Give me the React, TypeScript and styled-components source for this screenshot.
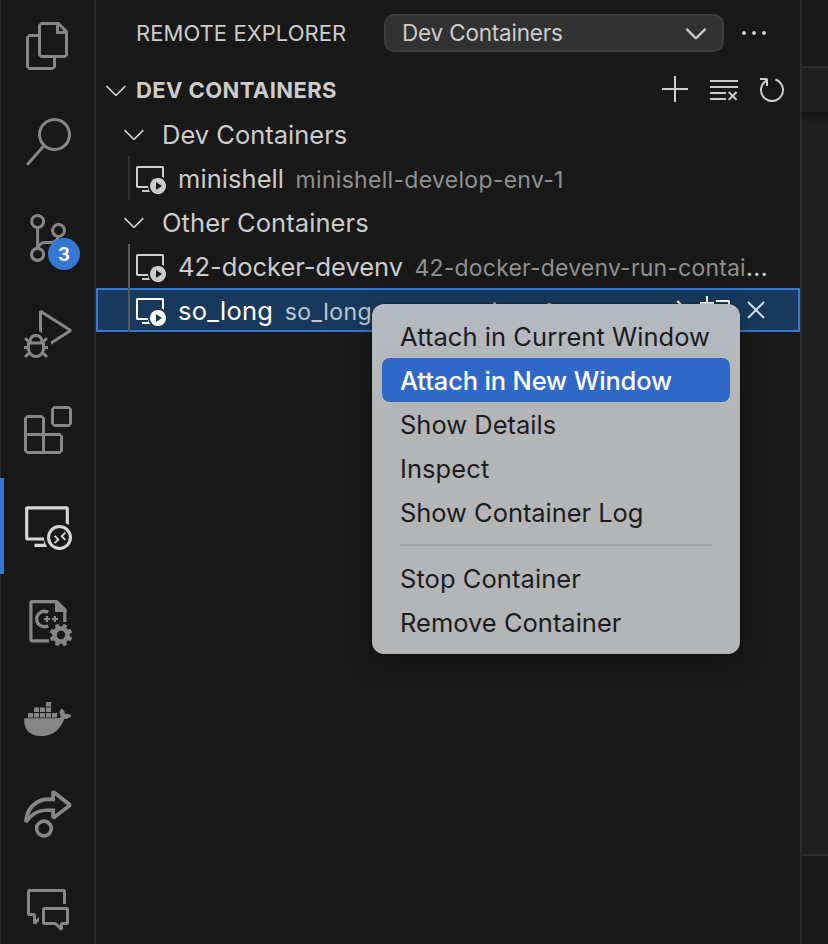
import React from 'react';
import styled, { createGlobalStyle, css } from 'styled-components';
import {
  VscAdd,
  VscArrowRight,
  VscChevronDown,
  VscClearAll,
  VscClose,
  VscCommentDiscussion,
  VscDebugAlt,
  VscEllipsis,
  VscEmptyWindow,
  VscExtensions,
  VscFiles,
  VscLiveShare,
  VscRefresh,
  VscRemoteExplorer,
  VscSearch,
  VscSourceControl,
  VscVmRunning,
} from 'react-icons/vsc';

const GlobalStyle = createGlobalStyle`
  * { box-sizing: border-box; }
  body {
    margin: 0;
    background: #181818;
    overflow: hidden;
    font-family: Inter, "Liberation Sans", sans-serif;
    -webkit-font-smoothing: antialiased;
  }
  svg { display: block; flex: none; }
`;

const Workbench = styled.div`
  position: relative;
  display: flex;
  width: 828px;
  height: 944px;
  overflow: hidden;
  background: #181818;
  color: #cccccc;
`;

/* Activity bar */

const ActivityBar = styled.nav`
  flex: none;
  width: 96px;
  border-left: 1px solid #2b2b2b;
  border-right: 2px solid #2b2b2b;
`;

const ActivityList = styled.div`
  display: flex;
  flex-direction: column;
  margin: -2px 0 0 -1px;
`;

const ActivityItem = styled.div<{ $active?: boolean }>`
  position: relative;
  display: flex;
  align-items: center;
  width: 96px;
  height: 96px;
  padding-left: 24px;
  color: ${(p) => (p.$active ? '#d7d7d7' : '#868686')};
  ${(p) =>
    p.$active &&
    css`
      padding-left: 20px;
      border-left: 4px solid #3478d4;
    `}
`;

const ShareIcon = styled(VscLiveShare)`
  width: 51px;
  height: 51px;
  margin: 0 0 2px -2.5px;
`;

const Badge = styled.span`
  position: absolute;
  left: 48px;
  top: 48px;
  width: 32px;
  height: 32px;
  border-radius: 50%;
  background: #3478d4;
  color: #ffffff;
  font-size: 18.5px;
  font-weight: 700;
  line-height: 32px;
  text-align: center;
`;

/* Side bar */

const SideBar = styled.section`
  display: flex;
  flex-direction: column;
  flex: none;
  width: 706px;
  border-right: 2px solid #2b2b2b;
`;

const TitleBar = styled.header`
  display: flex;
  align-items: center;
  height: 66px;
  padding-left: 40px;
`;

const Title = styled.h2`
  flex: none;
  width: 248px;
  margin: 0;
  font-size: 22px;
  font-weight: 400;
  letter-spacing: 0.05px;
`;

const Select = styled.div`
  display: flex;
  align-items: center;
  justify-content: space-between;
  width: 340px;
  height: 38px;
  padding: 0 10px 0 16px;
  border: 2px solid #3c3c3c;
  border-radius: 10px;
  background: #313131;
  font-size: 22.5px;
  letter-spacing: -0.19px;
  svg { stroke: currentColor; stroke-width: 0.4; }
`;

const SelectValue = styled.span`
  padding-bottom: 2px;
`;

const MoreButton = styled.span`
  margin-left: 14px;
`;

const SectionHeader = styled.div`
  display: flex;
  align-items: center;
  height: 46px;
  padding: 2px 12px 0 4px;
`;

const SectionTitle = styled.h3`
  flex: 1;
  margin: 0 0 0 4px;
  font-size: 22px;
  font-weight: 700;
  letter-spacing: 0.4px;
`;

const SectionActions = styled.div`
  display: flex;
  gap: 16px;
`;

const Tree = styled.div`
  display: flex;
  flex-direction: column;
`;

const GroupRow = styled.div`
  display: flex;
  align-items: center;
  height: 44px;
  padding-left: 22px;
`;

const GroupLabel = styled.span<{ $tracking?: number }>`
  padding-left: 12px;
  font-size: 25.5px;
  letter-spacing: ${(p) => p.$tracking ?? 0}px;
`;

const ItemRow = styled.div<{ $selected?: boolean }>`
  display: flex;
  align-items: center;
  height: 44px;
  padding: 0 28px 0 32px;
  ${(p) =>
    p.$selected &&
    css`
      background: #18395c;
      color: #ffffff;
      box-shadow: inset 0 0 0 2px #3478d4;
    `}
`;

const IndentGuide = styled.span<{ $strong?: boolean }>`
  flex: none;
  width: 2px;
  height: 44px;
  margin-right: 4px;
  background: ${(p) => (p.$strong ? '#585858' : '#303030')};
`;

const ItemText = styled.div`
  flex: 1;
  min-width: 0;
  padding: 2px 0 0 12px;
  overflow: hidden;
  white-space: nowrap;
  text-overflow: ellipsis;
  font-size: 25.5px;
  line-height: 36px;
  letter-spacing: -0.6px;
`;

const ItemName = styled.span<{ $tracking?: number }>`
  letter-spacing: ${(p) => p.$tracking ?? 0}px;
`;

const ItemDescription = styled.span<{ $tracking: number; $bright?: boolean }>`
  margin-left: 11.5px;
  color: ${(p) => (p.$bright ? '#bcc7d3' : '#909090')};
  font-size: 23px;
  letter-spacing: ${(p) => p.$tracking}px;
`;

const RowActions = styled.div`
  display: flex;
  gap: 8px;
  & > :last-child { color: #d3dae2; }
`;

/* Editor area */

const EditorArea = styled.main`
  display: flex;
  flex: 1;
  flex-direction: column;
`;

const EditorTabs = styled.div`
  height: 68px;
  border-bottom: 2px solid #2b2b2b;
`;

const Breadcrumbs = styled.div`
  height: 44px;
  background: #1f1f1f;
`;

const EditorBody = styled.div`
  flex: 1;
  background: linear-gradient(#151515, #1f1f1f 12px);
`;

const Panel = styled.div`
  height: 90px;
  border-top: 2px solid #2b2b2b;
`;

/* Context menu */

const Menu = styled.div`
  position: absolute;
  left: 372px;
  top: 304px;
  width: 368px;
  height: 350px;
  padding: 10px;
  border-radius: 12px;
  background: linear-gradient(#b4bac2, #b4b8bd 45px, #b4b5b7 110px);
  box-shadow: 0 0 2px rgba(0, 0, 0, 0.7), 0 8px 24px rgba(0, 0, 0, 0.25);
  color: #1c1c1d;
`;

const MenuItem = styled.div<{ $tracking?: number; $highlighted?: boolean }>`
  display: flex;
  align-items: center;
  height: 44px;
  padding-left: 18px;
  border-radius: 8px;
  font-size: 25.5px;
  letter-spacing: ${(p) => p.$tracking ?? 0}px;
  white-space: nowrap;
  ${(p) =>
    p.$highlighted &&
    css`
      background: #3068c8;
      color: #ffffff;
      font-weight: 500;
    `}
`;

const MenuSeparator = styled.hr`
  height: 2px;
  margin: 10px 18px;
  border: 0;
  background: #9fa0a3;
`;

function CppConfigIcon() {
  return (
    <svg width="48" height="48" viewBox="0 0 48 48" fill="none" stroke="currentColor">
      <path
        d="M25.2 42.8H8.5Q6.9 42.8 6.9 41.2V5.2Q6.9 3.6 8.5 3.6H32L40.8 12.5V24"
        strokeWidth="3.2"
      />
      <path d="M31 2.2H33.5L42.4 11V14H31z" fill="currentColor" stroke="none" />
      <path d="M24.8 14.3A7.7 7.7 0 1 0 24.8 27.7" strokeWidth="3.4" transform="translate(-0.6 0)" />
      <path d="M19.8 21h6.2M22.9 18v6M27.8 21h6.2M30.9 18v6" strokeWidth="2.2" />
      <circle cx="37" cy="37" r="6.5" strokeWidth="4.6" />
      {[0, 45, 90, 135, 180, 225, 270, 315].map((a) => (
        <path
          key={a}
          d="M34.4 30.5L35.1 25.7H38.9L39.6 30.5z"
          fill="currentColor"
          stroke="none"
          transform={`rotate(${a + 22.5} 37 37)`}
        />
      ))}
    </svg>
  );
}

function DockerIcon() {
  const crates = [
    [4, 19], [10, 19], [16, 19], [22, 19], [28, 19],
    [10, 13.4], [16, 13.4], [22, 13.4],
    [22, 8],
  ];
  return (
    <svg width="48" height="48" viewBox="0 0 48 48" fill="currentColor">
      {crates.map(([x, y]) => (
        <rect key={`${x}-${y}`} x={x} y={y} width="5.1" height="4.6" />
      ))}
      <path d="M0.2 24.8Q0.3 24.2 1 24.2H33.5Q36 24.2 37 22.8Q34.2 18.5 37.6 14.3Q41 16.8 40.9 19.8Q44.8 19.3 47.5 21.2Q45.5 25 40.2 25C36.5 35.5 28.8 42 17.2 42C5.5 42 -0.4 35.6 0.2 24.8z" />
    </svg>
  );
}

export default function App() {
  return (
    <Workbench>
      <GlobalStyle />
      <ActivityBar>
        <ActivityList>
          <ActivityItem><VscFiles size={48} /></ActivityItem>
          <ActivityItem><VscSearch size={48} /></ActivityItem>
          <ActivityItem>
            <VscSourceControl size={48} />
            <Badge>3</Badge>
          </ActivityItem>
          <ActivityItem><VscDebugAlt size={48} /></ActivityItem>
          <ActivityItem><VscExtensions size={48} /></ActivityItem>
          <ActivityItem $active><VscRemoteExplorer size={48} /></ActivityItem>
          <ActivityItem><CppConfigIcon /></ActivityItem>
          <ActivityItem><DockerIcon /></ActivityItem>
          <ActivityItem><ShareIcon /></ActivityItem>
          <ActivityItem><VscCommentDiscussion size={48} /></ActivityItem>
        </ActivityList>
      </ActivityBar>

      <SideBar>
        <TitleBar>
          <Title>REMOTE EXPLORER</Title>
          <Select>
            <SelectValue>Dev Containers</SelectValue>
            <VscChevronDown size={32} />
          </Select>
          <MoreButton><VscEllipsis size={32} /></MoreButton>
        </TitleBar>

        <SectionHeader>
          <VscChevronDown size={32} />
          <SectionTitle>DEV CONTAINERS</SectionTitle>
          <SectionActions>
            <VscAdd size={32} />
            <VscClearAll size={32} />
            <VscRefresh size={32} />
          </SectionActions>
        </SectionHeader>

        <Tree>
          <GroupRow>
            <VscChevronDown size={32} />
            <GroupLabel>Dev Containers</GroupLabel>
          </GroupRow>
          <ItemRow>
            <IndentGuide />
            <VscVmRunning size={32} />
            <ItemText>
              <ItemName $tracking={0.06}>minishell</ItemName>
              <ItemDescription $tracking={0.3}>minishell-develop-env-1</ItemDescription>
            </ItemText>
          </ItemRow>
          <GroupRow>
            <VscChevronDown size={32} />
            <GroupLabel $tracking={0.08}>Other Containers</GroupLabel>
          </GroupRow>
          <ItemRow>
            <IndentGuide $strong />
            <VscVmRunning size={32} />
            <ItemText>
              <ItemName $tracking={-0.03}>42-docker-devenv</ItemName>
              <ItemDescription $tracking={0.19}>42-docker-devenv-run-container</ItemDescription>
            </ItemText>
          </ItemRow>
          <ItemRow $selected>
            <IndentGuide $strong />
            <VscVmRunning size={32} />
            <ItemText>
              <ItemName $tracking={0.25}>so_long</ItemName>
              <ItemDescription $tracking={0.45} $bright>so_long-source-mixer-1</ItemDescription>
            </ItemText>
            <RowActions>
              <VscArrowRight size={32} />
              <VscEmptyWindow size={32} />
              <VscClose size={32} />
            </RowActions>
          </ItemRow>
        </Tree>
      </SideBar>

      <EditorArea>
        <EditorTabs />
        <Breadcrumbs />
        <EditorBody />
        <Panel />
      </EditorArea>

      <Menu>
        <MenuItem $tracking={0.05}>Attach in Current Window</MenuItem>
        <MenuItem $highlighted $tracking={-0.16}>Attach in New Window</MenuItem>
        <MenuItem>Show Details</MenuItem>
        <MenuItem $tracking={0.08}>Inspect</MenuItem>
        <MenuItem $tracking={-0.05}>Show Container Log</MenuItem>
        <MenuSeparator />
        <MenuItem $tracking={0.06}>Stop Container</MenuItem>
        <MenuItem>Remove Container</MenuItem>
      </Menu>
    </Workbench>
  );
}
